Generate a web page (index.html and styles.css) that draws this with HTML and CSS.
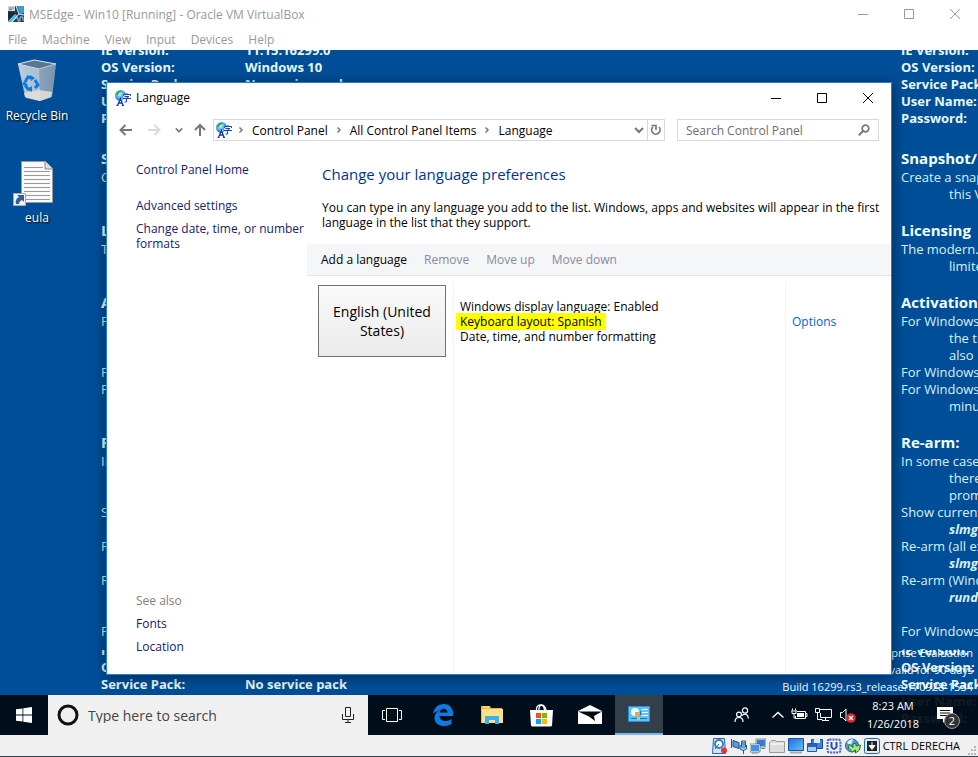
FILE: index.html
```html
<!DOCTYPE html>
<html lang="en">
<head>
<meta charset="utf-8">
<title>MSEdge - Win10 [Running] - Oracle VM VirtualBox</title>
<link rel="stylesheet" href="styles.css">
</head>
<body>
<svg class="defs" aria-hidden="true">
  <defs>
    <radialGradient id="globe" cx=".4" cy=".35" r=".7"><stop offset="0" stop-color="#d8f6ff"/><stop offset=".5" stop-color="#4fb2e6"/><stop offset="1" stop-color="#1858b0"/></radialGradient>
    <linearGradient id="screenBlue" x1="0" y1="0" x2="1" y2="1"><stop offset="0" stop-color="#1c6fd8"/><stop offset="1" stop-color="#66c0ff"/></linearGradient>
    <linearGradient id="bin" x1="0" y1="0" x2="1" y2="0"><stop offset="0" stop-color="#b9cbdc"/><stop offset=".5" stop-color="#8fa9c2"/><stop offset=".55" stop-color="#a7bbcd"/><stop offset="1" stop-color="#7f9ab5"/></linearGradient>
    <symbol id="lang" viewBox="0 0 16 16">
      <circle cx="5.500" cy="5.500" r="5.500" fill="url(#globe)"/>
      <path d="M1 4c1-3 4-4 6-3.500L6 2 4 3 3 5 1 5z" fill="#35a83a"/>
      <path d="M8 4h8v7H8z" fill="#fff" opacity=".75"/>
      <path d="m1.500 16 3.500-8h2l3 8z" fill="#fff" opacity=".8"/>
      <path d="M2.500 15.500 5.500 8.500 8 15.500M3.500 13h4M1.500 15.500h2M7 15.500h2" fill="none" stroke="#1238b0" stroke-width="1.300"/>
      <path d="M8.500 6V4.500h7V6M12 3v1.500M9.500 6.500h4.500l-2.500 1.500v4h-2M8 8.500h8" fill="none" stroke="#1744c0"/>
    </symbol>
    <symbol id="min" viewBox="0 0 10 10"><path d="M0 5.500h10" stroke="currentColor" fill="none"/></symbol>
    <symbol id="max" viewBox="0 0 10 10"><path d="M.5.5h9v9h-9z" stroke="currentColor" fill="none"/></symbol>
    <symbol id="close" viewBox="0 0 10 10"><path d="m0 0 10 10M10 0 0 10" stroke="currentColor" fill="none"/></symbol>
    <symbol id="chev" viewBox="0 0 8 8"><path d="m2.500 1.500 2.500 2.500-2.500 2.500" stroke="#777" stroke-width="1.500" fill="none"/></symbol>
    <symbol id="down" viewBox="0 0 10 10"><path d="m1 3 4 4 4-4" stroke="#777" stroke-width="2" fill="none"/></symbol>
  </defs>
</svg>

<header class="host-title">
  <svg class="i16" viewBox="0 0 16 16"><path d="M0 0h16v16H0z" fill="#1d3d55"/><path d="M0 0h7v5H0z" fill="#cfd6da"/><path d="M1 2h5M1 3.500h3" stroke="#7b8a94"/><path d="M0 6h6l2 2-5 8H0z" fill="#1b2c3a"/><path d="M9 0h7v7l-4 1z" fill="#3d9bd6"/><path d="M0 15 7 8l3 2-5 6H0z" fill="#55b4e8"/><path d="m8 0 3 8 5 1M11 8l-7 8" stroke="#e8f4fa" fill="none"/><path d="M8 12h2v3h2v-4h3v4" stroke="#a7d3ea" fill="none"/></svg>
  <h1>MSEdge - Win10 [Running] - Oracle VM VirtualBox</h1>
  <div class="controls">
    <button aria-label="Minimize"><svg><use href="#min"/></svg></button>
    <button aria-label="Maximize"><svg><use href="#max"/></svg></button>
    <button aria-label="Close"><svg><use href="#close"/></svg></button>
  </div>
</header>
<nav class="host-menu">
  <button>File</button><button>Machine</button><button>View</button><button>Input</button><button>Devices</button><button>Help</button>
</nav>

<main class="screen">
  <div class="wallpaper">
    <div class="tile">
      <dl>
        <dt>IE Version:</dt><dd>11.15.16299.0</dd>
        <dt>OS Version:</dt><dd>Windows 10</dd>
        <dt>Service Pack:</dt><dd>No service pack</dd>
        <dt>User Name:</dt><dd></dd>
        <dt>Password:</dt><dd></dd>
      </dl>
      <h2>Snapshot/</h2>
      <p>Create a snapshot</p><p class="in">this VM</p>
      <h2>Licensing</h2>
      <p>The modern.ie</p><p class="in">limited</p>
      <h2>Activation:</h2>
      <p>For Windows 7</p><p class="in">the trial</p><p class="in">also</p><p>For Windows 8</p><p>For Windows 10</p><p class="in">minutes</p>
      <h2>Re-arm:</h2>
      <p>In some cases</p><p class="in">there</p><p class="in">prompt</p>
      <p>Show current</p><p class="in cmd">slmgr</p>
      <p>Re-arm (all except</p><p class="in cmd">slmgr</p>
      <p>Re-arm (Windows</p><p class="in cmd">rundll32</p>
      <p class="after-gap">For Windows 8</p>
    </div>
  </div>

  <div class="shortcuts">
    <a href="#bin">
      <svg width="48" height="48" viewBox="0 0 48 48"><path d="m5 7 16-4 22 4-4 33-12 4-14-3z" fill="url(#bin)"/><path d="m5 7 16-4 22 4-17 5z" fill="#587794" stroke="#d9e4ec"/><path d="m5 7 21 5 1 32-15-4z" fill="#bccddc" opacity=".6"/><path d="m26 12 17-5-4 33-12 4z" fill="#7590ab" opacity=".55"/><path d="m11 36 15-3 13 2-1 5-11 4-15-4z" fill="#e4e2dc" opacity=".85"/><g fill="none" stroke="#0a7be0" stroke-width="3"><path d="m12 25 3-5 4 1M22 23l3 5-3 3M19 32h-4l-3-4"/></g><path d="m17 18 5 3-4 3zM19 29v6l-4-3zM9 28l2-4 4 4z" fill="#0a7be0"/></svg>
      <span>Recycle Bin</span>
    </a>
    <a href="#eula">
      <svg width="48" height="48" viewBox="0 0 48 48"><path d="M8.500 2.500h24l7 7v34h-31z" fill="#fafafa" stroke="#999"/><path d="M32 2v8h8" fill="#ddd" stroke="#888"/><path d="M11 8.500h19M11 12.500h26M11 16.500h26M11 20.500h26M11 24.500h26M11 28.500h26M11 32.500h26M11 36.500h26M11 40.500h26" stroke="#999"/><path d="M.5 34.500h12v12H.5z" fill="#f4f4f4" stroke="#aaa"/><path d="M3 45c-1-4 1-6 3-7l-2-2h7v7l-2-2c-2 1-3 2-3 4z" fill="#2d5f9e"/></svg>
      <span>eula</span>
    </a>
  </div>

  <p class="watermark">Windows 10 Enterprise Evaluation<br>Windows License valid for 90 days<br>Build 16299.rs3_release.170928-1534</p>

  <section class="window" aria-label="Language">
    <header class="win-title">
      <svg class="i16"><use href="#lang"/></svg>
      <h2>Language</h2>
      <div class="controls">
        <button aria-label="Minimize"><svg><use href="#min"/></svg></button>
        <button aria-label="Maximize"><svg><use href="#max"/></svg></button>
        <button aria-label="Close"><svg><use href="#close"/></svg></button>
      </div>
    </header>
    <div class="toolbar">
      <div class="history">
        <button aria-label="Back"><svg width="14" height="12" viewBox="0 0 14 12"><path d="M13 6H2M6.500 1 1.500 6l5 5" fill="none" stroke="#777" stroke-width="2"/></svg></button>
        <button aria-label="Forward" disabled><svg width="14" height="12" viewBox="0 0 14 12"><path d="M1 6h11M7.500 1l5 5-5 5" fill="none" stroke="#dadada" stroke-width="2"/></svg></button>
        <button aria-label="Recent locations"><svg width="8" height="8" viewBox="0 0 10 10"><use href="#down"/></svg></button>
        <button aria-label="Up"><svg width="12" height="14" viewBox="0 0 12 14"><path d="M6 13V2M1 7l5-5 5 5" fill="none" stroke="#777" stroke-width="2"/></svg></button>
      </div>
      <div class="address">
        <svg class="i16"><use href="#lang"/></svg>
        <svg class="sep"><use href="#chev"/></svg><a href="#cp">Control Panel</a>
        <svg class="sep"><use href="#chev"/></svg><a href="#all">All Control Panel Items</a>
        <svg class="sep"><use href="#chev"/></svg><a href="#lang-page">Language</a>
        <button class="drop" aria-label="Previous locations"><svg width="10" height="10"><use href="#down"/></svg></button>
        <button class="refresh" aria-label="Refresh"><svg width="12" height="12" viewBox="0 0 12 12"><path d="M9 3a4.200 4.200 0 1 1-6-.2" fill="none" stroke="#777" stroke-width="1.700"/><path d="M1.500 1.500h4.500V6" fill="none" stroke="#777" stroke-width="1.700"/></svg></button>
      </div>
      <div class="search">
        <input type="search" aria-label="Search Control Panel" placeholder="Search Control Panel">
        <svg width="12" height="12" viewBox="0 0 12 12"><circle cx="7.500" cy="4.500" r="3.300" fill="none" stroke="#777" stroke-width="1.700"/><path d="M5 7 .8 11.200" stroke="#777" stroke-width="2"/></svg>
      </div>
    </div>
    <div class="content">
      <aside>
        <a href="#home" class="home">Control Panel Home</a>
        <a href="#adv">Advanced settings</a>
        <a href="#date">Change date, time, or number formats</a>
        <h3>See also</h3>
        <a href="#fonts">Fonts</a>
        <a href="#location">Location</a>
      </aside>
      <div class="pane">
        <h1>Change your language preferences</h1>
        <p class="intro">You can type in any language you add to the list. Windows, apps and websites will appear in the first language in the list that they support.</p>
        <div class="commands">
          <button>Add a language</button><button disabled>Remove</button><button disabled>Move up</button><button disabled>Move down</button>
        </div>
        <div class="list">
          <div class="col"><button class="language">English (United States)</button></div>
          <div class="col details"><p>Windows display language: Enabled</p><p><mark>Keyboard layout: Spanish</mark></p><p>Date, time, and number formatting</p></div>
          <div class="col options"><a href="#options">Options</a></div>
        </div>
      </div>
    </div>
  </section>

  <footer class="taskbar">
    <button class="task" aria-label="Start"><svg width="16" height="16" viewBox="0 0 16 16"><path d="m0 2.300 6.500-.9v6.200H0zM7.300 1.300 16 0v7.600H7.300zM0 8.400h6.500v6.200L0 13.700zM7.300 8.400H16V16l-8.700-1.300z" fill="#fff"/></svg></button>
    <label class="cortana">
      <svg width="24" height="24" viewBox="0 0 24 24"><circle cx="12" cy="12" r="9" fill="none" stroke="#111" stroke-width="3"/></svg>
      <input type="text" aria-label="Search" placeholder="Type here to search">
      <svg width="12" height="18" viewBox="0 0 12 18"><path d="M3.500 1.500h5v9h-5zM.5 8v5.500h11V8M6 13.500v3M3 16.500h6" fill="none" stroke="#222"/></svg>
    </label>
    <div class="tasks">
      <button class="task" aria-label="Task View"><svg width="20" height="14" viewBox="0 0 20 14"><path d="M4.500.5h11v13h-11zM3 2.500H.5v9H3M17 2.500h2.500v9H17" fill="none" stroke="#fff"/></svg></button>
      <button class="task" aria-label="Microsoft Edge"><svg width="22" height="22" viewBox="0 0 22 22"><path d="M1 10C2 4 6 0 12 0c6 0 9 5 9 9v3H7.500c.5 6 8 6 12 3v5c-7 4-16 2-17-5-.5-4 2-7 5-9-2 1-5 2-6.500 4zm6.500-1.500h8c0-5-7-5-8 0z" fill="#0f7be0"/></svg></button>
      <button class="task" aria-label="File Explorer"><svg width="22" height="20" viewBox="0 0 22 20"><path d="M0 1h9l1 2h11v15H0z" fill="#e8b73c"/><path d="M1 4h21v14H1z" fill="#ffe08a"/><path d="M2 2h6" stroke="#fff3c4"/><path d="M4 19v-8h14v8h-4v-4H8v4z" fill="#39b2ea"/></svg></button>
      <button class="task" aria-label="Microsoft Store"><svg width="24" height="24" viewBox="0 0 24 24"><path d="M7.500 8c-1-8 8-8 8-1M10 8c-1-9 7-7 7 0" fill="none" stroke="#fff" stroke-width="1.300"/><path d="M1 7h23l-1 15.500-1 1H3l-1-1z" fill="#fff"/><path d="M7 10h5v5H7z" fill="#f25022"/><path d="M13 10h5v5h-5z" fill="#7fba00"/><path d="M7 16h5v5H7z" fill="#00a4ef"/><path d="M13 16h5v5h-5z" fill="#ffb900"/></svg></button>
      <button class="task" aria-label="Mail"><svg width="24" height="20" viewBox="0 0 24 20"><path d="M0 6 12 0l12 6v13H0z" fill="#fff"/><path d="M0 6.500h24l-8 4.500 1 5-6-4.500z" fill="#000a14"/></svg></button>
      <button class="task active" aria-label="Control Panel"><svg width="22" height="16" viewBox="0 0 22 16"><path d="M.5.5h21v15H.5z" fill="#5fc4f5" stroke="#2c8ed4"/><circle cx="7" cy="6" r="4" fill="#f7fbff"/><path d="M7 2v4h4a4 4 0 0 1-4 4z" fill="#f4a51c"/><path d="M14 3h6v1h-6zM14 6h6v1h-6zM14 9h6v1h-6z" fill="#fff"/><path d="M12.500 9V5" stroke="#1873bd"/><path d="M3 12.500h16" stroke="#2072ae"/><path d="M9 12.500h3" stroke="#ffc842" stroke-width="2"/></svg></button>
    </div>
    <div class="tray">
      <svg class="people" width="16" height="16" viewBox="0 0 16 16"><g fill="none" stroke="#fff" stroke-width="1.200"><circle cx="5" cy="7.500" r="2.400"/><circle cx="11" cy="3.500" r="2.600"/><path d="M1 15c0-6 8-6 8 0M8 8.500c3-3 6-1 6.500 3"/></g></svg>
      <svg width="12" height="16" viewBox="0 0 12 16"><path d="m.5 10.500 5.500-5 5.500 5" fill="none" stroke="#fff" stroke-width="1.300"/></svg>
      <svg width="17" height="16" viewBox="0 0 17 16"><path d="M6 4.500h8.500v7h-10V9M14.500 6.500H16v3h-1.500" fill="none" stroke="#fff"/><path d="M6 6h7v4H6z" fill="#fff"/><path d="M1.500 1.500v2M4.500 1.500v2M0 4h6M1 4.500v2h4v-2M3 7v4h2" fill="none" stroke="#fff"/></svg>
      <svg width="17" height="16" viewBox="0 0 17 16"><path d="M5 2.500h11.500v8h-11V6M.5 1.500h4v4h-4zM2.500 5.500v7h5M10.500 10.500v3M7 13.500h7" fill="none" stroke="#fff"/></svg>
      <svg width="17" height="16" viewBox="0 0 17 16"><path d="M1.500 5.500h2l3.500-3.500v12l-3.500-3.500h-2z" fill="none" stroke="#fff"/><circle cx="12" cy="11" r="4.800" fill="#dc2430"/><path d="m10 9 4 4m0-4-4 4" stroke="#fff" stroke-width="1.400"/></svg>
      <time>8:23 AM<br>1/26/2018</time>
      <button class="notify" aria-label="2 new notifications"><svg width="16" height="16" viewBox="0 0 16 16"><path d="M0 0h16v12H9l-3 4v-4H0z" fill="#fff"/><path d="M3 3.500h10M3 6h10M3 8.500h7" stroke="#111"/></svg><span>2</span></button>
    </div>
  </footer>
</main>

<footer class="host-status">
  <svg class="i16" viewBox="0 0 16 16"><path d="M1.500.5h11l1 15h-13z" fill="#cfe6f8" stroke="#2868aa"/><circle cx="7" cy="6" r="4" fill="#fff" stroke="#397fbe" stroke-width="2"/><path d="m7 6-4 5" stroke="#215b98"/><circle cx="12" cy="12.500" r="3" fill="#e23434"/></svg>
  <svg class="i16" viewBox="0 0 16 16"><path d="M.5 1v9M2 2.500l6 2v6l-6-2z" fill="#5a9fdc" stroke="#155492"/><path d="M10.500 3h4v6h-4zM9 7v4q3 3 6.500 0V7M12.500 12v4" fill="#a7cdf0" stroke="#235d97"/><path d="M10 5h5M10 7h5" stroke="#235d97"/></svg>
  <svg class="i16" viewBox="0 0 16 16"><path d="M6.500 1.500h9v7h-9z" fill="#2f7edd" stroke="#ddd"/><path d="M6 1h10v8H6z" fill="none" stroke="#4a5a70" stroke-width=".6"/><path d="M.5 6.500h9v7h-9z" fill="#3f92ee" stroke="#fff"/><path d="M0 6h10v8H0z" fill="none" stroke="#444" stroke-width=".6"/><path d="M2 15h6M11 10.500h4" stroke="#888"/></svg>
  <svg class="i16" viewBox="0 0 16 16"><path d="M.5 14.500v-10l2-2h4l1 1h8v11z" fill="#ddd" stroke="#999"/><path d="M1 6h14" stroke="#fff"/></svg>
  <svg class="i16" viewBox="0 0 16 16"><path d="M.5.500h15v12H.5z" fill="url(#screenBlue)" stroke="#1753a8"/><path d="M2 14.500h12" stroke="#aaa" stroke-width="2"/></svg>
  <svg class="i16" viewBox="0 0 16 16"><path d="M4.500 1.500h11v9h-11z" fill="#3c83de" stroke="#1b4c94"/><path d="M7 1v4h6V1" fill="#dcecff"/><path d="M.5 5.500h9v8h-9z" fill="#a7ceff" stroke="#2758a4"/><path d="M1 6h8v3H1z" fill="#2462bd"/></svg>
  <svg class="i16" viewBox="0 0 16 16"><rect x="1.500" y="1.500" width="13" height="13" rx="2" fill="#d9e4ff" stroke="#4867b5" stroke-width="2" stroke-dasharray="2 1"/><path d="M3 3h10v10H3z" fill="#eef3ff"/><path d="M5.500 4v5q2.500 4 5 0V4" fill="none" stroke="#304caa" stroke-width="2"/></svg>
  <svg class="i16" viewBox="0 0 16 16"><circle cx="7" cy="7.500" r="6.500" fill="#4c9cdc" stroke="#236095"/><path d="M2 4q3-3 6-3L7 5 4 8z" fill="#dff2ff"/><path d="m4 6 4 3.500V6l3-1v3l4.500-1-1 5-4 3v-3l-3 2-4-4z" fill="#a5e67e" stroke="#267035"/></svg>
  <svg class="i16" viewBox="0 0 16 16"><rect x=".5" y=".5" width="15" height="15" rx="2" fill="#dbeeff" stroke="#2864ab"/><path d="M3 3h10v10H3z" fill="#222"/><path d="M8 4v4M5 7.500h6l-3 4z" fill="#fff" stroke="#fff"/></svg>
  <span>CTRL DERECHA</span>
  <svg class="grip" width="10" height="10" viewBox="0 0 10 10"><path d="M7 0h2v2H7zM4 3h2v2H4zM7 3h2v2H7zM1 7h2v2H1zM4 7h2v2H4zM7 7h2v2H7z" fill="#b8b8b8"/></svg>
</footer>
<script src="script.js"></script>
</body>
</html>
```
FILE: styles.css
```css
* { box-sizing: border-box; }

body, h1, h2, h3, p, dl, dd { margin: 0; }

body {
  display: flex;
  flex-direction: column;
  min-height: 100vh;
  background: #fff;
  color: #000;
  font: 12px/15px "Open Sans", "Noto Sans", sans-serif;
}

h1, h2, h3 { font-size: inherit; font-weight: 400; }

a { color: inherit; text-decoration: none; }

button, input {
  margin: 0;
  padding: 0;
  border: 0;
  background: none;
  color: inherit;
  font: inherit;
}

svg { display: block; flex: none; }

.defs { position: absolute; width: 0; height: 0; }

.i16 { width: 16px; height: 16px; }

.controls { display: flex; margin-left: auto; }

.controls button {
  display: grid;
  place-items: center;
  width: 46px;
  height: 28px;
}

.controls svg { width: 10px; height: 10px; }

/* Host window */

.host-title {
  display: flex;
  align-items: center;
  gap: 5px;
  height: 28px;
  padding-left: 8px;
  color: #999;
}

.host-menu {
  display: flex;
  align-items: center;
  gap: 15px;
  height: 22px;
  padding-left: 8px;
  color: #999;
}

.host-status {
  display: flex;
  align-items: center;
  justify-content: flex-end;
  gap: 3px;
  height: 22px;
  padding-right: 1px;
  border-bottom: 1px solid #2b4257;
  background: #f0f0f0;
  font-size: 11px;
}

.grip { align-self: flex-end; margin-left: 4px; }

/* Guest screen */

.screen {
  position: relative;
  flex: 1;
  display: flex;
  flex-direction: column;
  background: #004e98;
}

.wallpaper {
  position: absolute;
  inset: 0;
  overflow: hidden;
  display: grid;
  grid-template: 600px 600px / 800px 800px;
  padding-left: 101px;
  color: #d9f2f5;
  font-size: 13px;
  line-height: 17px;
  white-space: nowrap;
}

.tile { overflow: hidden; }

.tile dl {
  display: grid;
  grid-template-columns: 144px 1fr;
  grid-auto-rows: 17px;
  margin: -8px 0 21px;
  color: #e6f8fa;
  font-weight: 700;
}

.tile h2 {
  margin-top: 17px;
  color: #f0ffff;
  font-size: 15px;
  font-weight: 700;
  line-height: 21px;
}

.tile .in { padding-left: 48px; }
.tile .cmd { font-style: italic; font-weight: 700; }
.tile .after-gap { margin-top: 17px; }

.shortcuts {
  position: relative;
  display: flex;
  flex-direction: column;
  gap: 28px;
  width: 74px;
  padding-top: 7px;
  color: #fff;
  text-align: center;
  text-shadow: 1px 1px 2px #000;
}

.shortcuts a {
  display: flex;
  flex-direction: column;
  align-items: center;
  gap: 3px;
  min-height: 74px;
}

.watermark {
  position: absolute;
  right: 5px;
  bottom: 40px;
  color: #fff;
  font-size: 11px;
  line-height: 17px;
  text-align: right;
}

/* Language window */

.window {
  position: absolute;
  inset: 32px 86px 60px 106px;
  display: flex;
  flex-direction: column;
  border: 1px solid #1883d7;
  background: #fff;
  box-shadow: 0 2px 12px rgba(0, 0, 0, .5);
}

.win-title {
  display: flex;
  align-items: center;
  gap: 5px;
  height: 29px;
  padding-left: 8px;
}

.toolbar {
  display: flex;
  align-items: center;
  gap: 12px;
  height: 36px;
  padding: 0 12px;
}

.history {
  display: flex;
  align-items: center;
  gap: 14px;
  margin-right: -5px;
}

.history button:last-child { margin-left: -3px; }

.address, .search {
  display: flex;
  align-items: center;
  height: 22px;
  border: 1px solid #d9d9d9;
}

.address { flex: 1; padding-left: 2px; }
.address a { padding: 0 2px; }
.sep { width: 8px; height: 8px; margin: 0 5px; }
.drop { margin-left: auto; margin-right: 3px; }

.refresh {
  display: grid;
  place-items: center;
  width: 17px;
  height: 20px;
  border-left: 1px solid #d9d9d9;
}

.search { width: 202px; padding: 0 8px; }
.search input { flex: 1; min-width: 0; outline: 0; }
.search input::placeholder { color: #6d6d6d; opacity: 1; }

.content { flex: 1; display: flex; }

aside {
  display: flex;
  flex-direction: column;
  gap: 8px;
  width: 200px;
  padding: 14px 0 20px 29px;
  color: #151c6b;
}

aside .home { margin-bottom: 13px; }
aside h3 { margin-top: auto; color: #808080; }

.pane { flex: 1; display: flex; flex-direction: column; }

.pane h1 {
  padding: 15px 15px 0;
  color: #003399;
  font-size: 15px;
  line-height: 22px;
}

.intro { padding: 15px 0 14px 15px; }

.commands {
  display: flex;
  align-items: center;
  gap: 17px;
  height: 32px;
  padding: 0 14px;
  border-bottom: 1px solid #e5e5e5;
  background: #f5f6f7;
}

.commands button:disabled { color: #8a8aa3; }

.list {
  flex: 1;
  display: grid;
  grid-template-columns: 146px 1fr 106px;
  margin-top: 6px;
}

.col { padding: 3px 6px; border-left: 1px solid #edf4fa; }
.col:first-child { padding-left: 11px; border: 0; }
.col.details { padding-top: 17px; }
.col.options { padding-top: 32px; color: #0066cc; }

.language {
  width: 128px;
  height: 72px;
  padding: 0 12px;
  border: 1px solid #707070;
  background: linear-gradient(#fafafa, #ebebeb);
  font-size: 14px;
  line-height: 19px;
}

mark {
  margin-left: -4px;
  padding: 0 4px;
  background: #ff0;
}

/* Taskbar */

.taskbar {
  position: relative;
  display: flex;
  height: 40px;
  margin-top: auto;
  background: rgba(0, 8, 16, .92);
  color: #fff;
}

.tasks { display: flex; gap: 1px; }

.tasks .task:first-child { margin-right: 2px; }

.task {
  display: grid;
  place-items: center;
  width: 48px;
  height: 40px;
}

.task.active {
  border-bottom: 2px solid #76b9ed;
  background: #333f49;
}

.cortana {
  display: flex;
  align-items: center;
  gap: 8px;
  width: 320px;
  padding: 0 14px 0 8px;
  background: #f0f0f0;
  color: #222;
  font-size: 14px;
}

.cortana input { flex: 1; min-width: 0; outline: 0; }
.cortana input::placeholder { color: #444; opacity: 1; }

.tray {
  display: flex;
  align-items: center;
  gap: 7px;
  margin-left: auto;
  padding-right: 25px;
}

.people { margin-right: 15px; }

.tray time {
  width: 60px;
  font-size: 11px;
  line-height: 18px;
  text-align: center;
}

.notify { position: relative; margin-left: 7px; }

.notify span {
  position: absolute;
  left: 7px;
  top: 6px;
  width: 16px;
  height: 16px;
  border: 1px solid #999;
  border-radius: 50%;
  background: #333;
  font-size: 11px;
  line-height: 14px;
}
```
FILE: script.js
```js
// Repeat the wallpaper tile to the right and below.
const wallpaper = document.querySelector('.wallpaper');
const tile = wallpaper.querySelector('.tile');
for (let i = 0; i < 3; i++) {
  const copy = tile.cloneNode(true);
  copy.setAttribute('aria-hidden', 'true');
  wallpaper.append(copy);
}
```
